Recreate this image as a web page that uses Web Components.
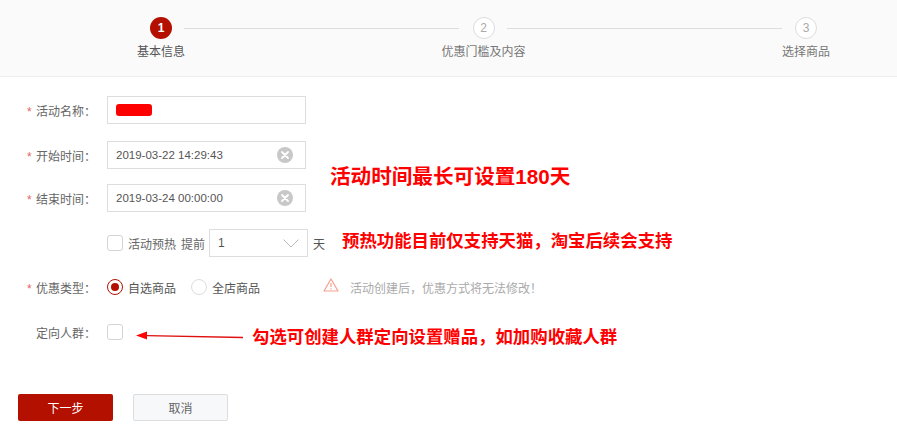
<!DOCTYPE html>
<html lang="zh">
<head>
<meta charset="utf-8">
<title>活动设置</title>
<style>
  html, body { margin: 0; padding: 0; background: #fff; }
  body { width: 897px; height: 447px; overflow: hidden; position: relative; font-family: "Liberation Sans", "Noto Sans CJK SC", sans-serif; font-size: 12px; color: #666; }
  .pre { margin-left: 5px; white-space: nowrap; }
  .unit { margin-left: 5px; color: #555; }
  .tip { margin-left: 48px; }
  form-row.first { margin-top: 19px; }
</style>
</head>
<body>
<step-bar>
  <step-item num="1" active>基本信息</step-item>
  <step-item num="2">优惠门槛及内容</step-item>
  <step-item num="3">选择商品</step-item>
</step-bar>

<form-row class="first" label="活动名称" required gap="17"><text-input masked></text-input></form-row>
<form-row label="开始时间" required gap="15"><text-input value="2019-03-22 14:29:43" clearable></text-input></form-row>
<form-row label="结束时间" required gap="17"><text-input value="2019-03-24 00:00:00" clearable></text-input></form-row>
<form-row gap="16">
  <check-box>活动预热</check-box>
  <span class="pre">提前</span>
  <select-box value="1"></select-box>
  <span class="unit">天</span>
</form-row>
<form-row label="优惠类型" required gap="17">
  <radio-opt checked>自选商品</radio-opt>
  <radio-opt>全店商品</radio-opt>
  <warn-tip class="tip">活动创建后，优惠方式将无法修改！</warn-tip>
</form-row>
<form-row label="定向人群" gap="0"><check-box></check-box></form-row>

<action-bar>
  <app-button primary>下一步</app-button>
  <app-button>取消</app-button>
</action-bar>

<call-out x="330" y="163" size="20.6">活动时间最长可设置180天</call-out>
<call-out x="342" y="227" size="17.4">预热功能目前仅支持天猫，淘宝后续会支持</call-out>
<call-out x="252" y="323" size="17.4">勾选可创建人群定向设置赠品，如加购收藏人群</call-out>
<arrow-mark></arrow-mark>

<script>
  const FONT = '"Liberation Sans", "Noto Sans CJK SC", sans-serif'

  class Base extends HTMLElement {
    constructor() {
      super()
      this.attachShadow({ mode: 'open' })
    }
    render(html) { this.shadowRoot.innerHTML = html }
  }

  class StepBar extends Base {
    connectedCallback() {
      this.render(`<style>
        :host { display: block; height: 76px; background: #fafafa; border-bottom: 1px solid #eee; box-sizing: content-box; }
        .row { display: flex; justify-content: space-between; padding: 17px 67px 0 137px; }
      </style><div class="row"><slot></slot></div>`)
    }
  }

  class StepItem extends Base {
    connectedCallback() {
      const n = this.getAttribute('num')
      const active = this.hasAttribute('active')
      this.render(`<style>
        :host { display: block; width: 48px; position: relative; font: 12px ${FONT}; color: ${active ? '#555' : '#777'}; }
        .wrap { display: flex; flex-direction: column; align-items: center; width: 48px; }
        .dot { width: 22px; height: 22px; border-radius: 50%; box-sizing: border-box; display: flex; align-items: center; justify-content: center; font-size: 12px;
          ${active ? 'background:#b31000;color:#fff;font-weight:bold;' : 'background:#fff;border:1px solid #ddd;color:#aaa;'} }
        .name { margin-top: 6px; white-space: nowrap; line-height: 14px; }
        .line { position: absolute; top: 11px; left: 47px; height: 1px; width: 275px; background: #ddd; }
        :host([num="3"]) .line { display: none; }
      </style><div class="wrap"><div class="dot">${n}</div><div class="name"><slot></slot></div></div><div class="line"></div>`)
    }
  }

  class FormRow extends Base {
    connectedCallback() {
      const label = this.getAttribute('label')
      const req = this.hasAttribute('required')
      this.render(`<style>
        :host { display: flex; align-items: center; height: 28px; padding-left: 26px; margin-bottom: ${this.getAttribute('gap') || 0}px; font: 12px ${FONT}; color: #666; }
        .lab { width: 81px; flex: none; display: flex; align-items: center; white-space: nowrap; }
        .star { width: 10px; padding-top: 3px; padding-left: 1px; margin-right: -1px; color: #e4655a; font-size: 12px; }
      </style><div class="lab"><span class="star">${req ? '*' : ''}</span>${label ? label + '：' : ''}</div><slot></slot>`)
    }
  }

  class TextInput extends Base {
    connectedCallback() {
      const v = this.getAttribute('value') || ''
      const masked = this.hasAttribute('masked')
      const clear = this.hasAttribute('clearable')
      this.render(`<style>
        :host { display: flex; align-items: center; justify-content: space-between; width: 199px; height: 28px; box-sizing: border-box; border: 1px solid #ddd; padding: 0 12px 0 8px; background: #fff; font: 11.5px ${FONT}; color: #555; }
        .mask { width: 36px; height: 12px; border-radius: 3px; background: #f00; }
        svg { display: block; }
      </style>${masked ? '<div class="mask"></div>' : `<span>${v}</span>`}
      ${clear ? `<svg width="16" height="16" viewBox="0 0 16 16"><circle cx="8" cy="8" r="8" fill="#c8c8c8"/><path d="M5 5l6 6M11 5l-6 6" stroke="#fff" stroke-width="1.8" stroke-linecap="round"/></svg>` : ''}`)
    }
  }

  class CheckBox extends Base {
    connectedCallback() {
      this.render(`<style>
        :host { display: inline-flex; align-items: center; font: 12px ${FONT}; color: #666; white-space: nowrap; }
        .box { width: 16px; height: 16px; box-sizing: border-box; border: 1px solid #d4d4d4; border-radius: 3px; background: #fff; }
        .t { margin-left: 5px; }
        .t:empty { display: none; }
      </style><span class="box"></span><span class="t">${this.textContent.trim()}</span>`)
    }
  }

  class SelectBox extends Base {
    connectedCallback() {
      this.render(`<style>
        :host { display: flex; align-items: center; justify-content: space-between; width: 99px; height: 28px; box-sizing: border-box; margin-left: 4px; border: 1px solid #ddd; padding: 0 8px; font: 12px ${FONT}; color: #555; background: #fff; }
        svg { display: block; }
      </style><span>${this.getAttribute('value')}</span>
      <svg width="16" height="9" viewBox="0 0 16 9"><path d="M.5 .5L8 8L15.5 .5" fill="none" stroke="#bbb" stroke-width="1"/></svg>`)
    }
  }

  class RadioOpt extends Base {
    connectedCallback() {
      const on = this.hasAttribute('checked')
      this.render(`<style>
        :host { display: inline-flex; align-items: center; margin-right: 15px; font: 12px ${FONT}; color: #555; white-space: nowrap; }
        .r { width: 16px; height: 16px; box-sizing: border-box; border-radius: 50%; border: 1px solid ${on ? '#b31000' : '#ddd'}; display: flex; align-items: center; justify-content: center; margin-right: 5px; }
        .d { width: 8px; height: 8px; border-radius: 50%; background: #b31000; }
      </style><span class="r">${on ? '<span class="d"></span>' : ''}</span><slot></slot>`)
    }
  }

  class WarnTip extends Base {
    connectedCallback() {
      this.render(`<style>
        :host { display: inline-flex; align-items: center; font: 12px ${FONT}; color: #aaa; white-space: nowrap; }
        svg { display: block; margin-right: 11px; margin-top: -5px; }
      </style><svg width="16" height="14" viewBox="0 0 16 14"><path d="M8 1L15 13H1Z" fill="none" stroke="#f3a08e" stroke-width="1.2" stroke-linejoin="round"/><path d="M8 5v4M8 10.2v1.2" stroke="#f3a08e" stroke-width="1.2"/></svg><slot></slot>`)
    }
  }

  class ActionBar extends Base {
    connectedCallback() {
      this.render(`<style>
        :host { display: flex; gap: 20px; padding-left: 18px; margin-top: 48px; }
      </style><slot></slot>`)
    }
  }

  class AppButton extends Base {
    connectedCallback() {
      const p = this.hasAttribute('primary')
      this.render(`<style>
        :host { display: flex; align-items: center; justify-content: center; width: 95px; height: 27px; box-sizing: border-box; border-radius: 2px; font: 12px ${FONT};
          ${p ? 'background:#b31000;color:#fff;' : 'background:#f7f8fa;border:1px solid #ddd;color:#666;'} }
      </style><slot></slot>`)
    }
  }

  // annotations drawn on top of the screenshot
  class CallOut extends Base {
    connectedCallback() {
      const a = n => this.getAttribute(n)
      this.render(`<style>
        :host { position: absolute; left: ${a('x')}px; top: ${a('y')}px; font: bold ${a('size')}px/28px ${FONT}; color: #f00; white-space: nowrap; }
      </style><slot></slot>`)
    }
  }

  class ArrowMark extends Base {
    connectedCallback() {
      this.render(`<style>
        :host { position: absolute; left: 135px; top: 330px; }
        svg { display: block; }
      </style><svg width="110" height="12" viewBox="0 0 110 12"><path d="M12 5.6L108 7.5" stroke="#e01010" stroke-width="1.4" fill="none"/><path d="M1 5.5L12 1.5V9.5Z" fill="#f00"/></svg>`)
    }
  }

  const defs = { 'step-bar': StepBar, 'step-item': StepItem, 'form-row': FormRow, 'text-input': TextInput, 'check-box': CheckBox, 'select-box': SelectBox, 'radio-opt': RadioOpt, 'warn-tip': WarnTip, 'action-bar': ActionBar, 'app-button': AppButton, 'call-out': CallOut, 'arrow-mark': ArrowMark }
  for (const [tag, cls] of Object.entries(defs)) customElements.define(tag, cls)
</script>
</body>
</html>
